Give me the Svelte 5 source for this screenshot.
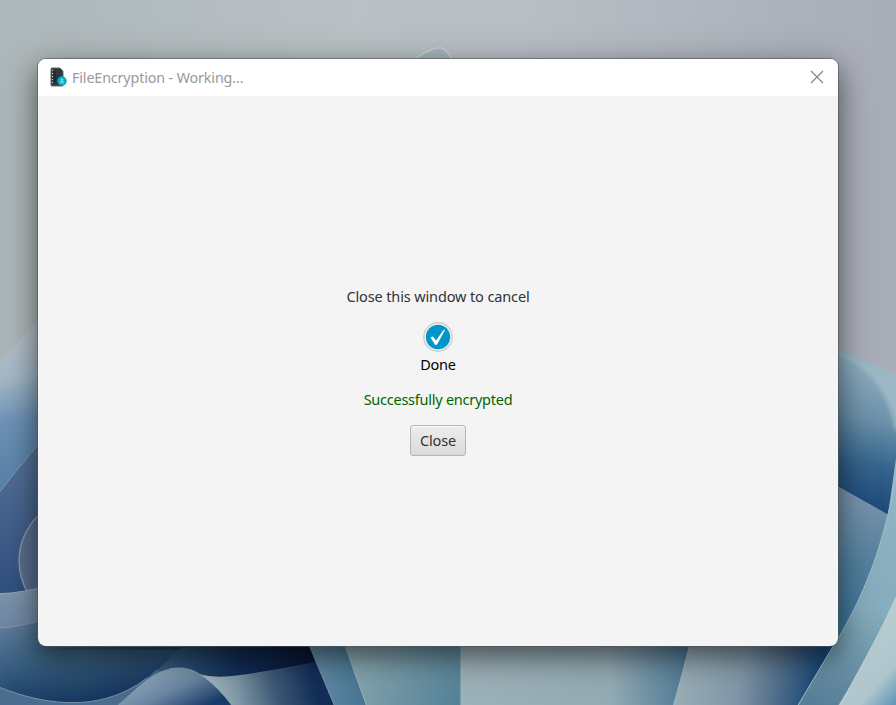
<script>
  const title = 'FileEncryption - Working...';
</script>

<main class="desktop">
  <svg class="wallpaper" viewBox="0 0 896 705" aria-hidden="true">
    <defs>
      <linearGradient id="sky"><stop offset="0" stop-color="#adb7b9" /><stop offset=".4" stop-color="#b9c1c4" /><stop offset=".6" stop-color="#b8bec4" /><stop offset=".9" stop-color="#abb1ba" /><stop offset="1" stop-color="#a9adb8" /></linearGradient>
      <linearGradient id="leftPetal" gradientUnits="userSpaceOnUse" x1="0" y1="345" x2="50" y2="600"><stop offset="0" stop-color="#b1bfc8" /><stop offset=".13" stop-color="#a5b8c7" /><stop offset=".3" stop-color="#6c92b6" /><stop offset=".6" stop-color="#547da6" /><stop offset="1" stop-color="#294979" /></linearGradient>
      <linearGradient id="leftInner" x1="0" y1="0" x2="0" y2="1"><stop offset="0" stop-color="#607a9d" /><stop offset="1" stop-color="#2b4b7d" /></linearGradient>
      <linearGradient id="fold" x1="0" y1="0" x2="0" y2="1"><stop offset="0" stop-color="#8296ad" /><stop offset="1" stop-color="#66809f" /></linearGradient>
      <linearGradient id="bottom" gradientUnits="userSpaceOnUse" x1="15" y1="620" x2="45" y2="705"><stop offset="0" stop-color="#617d9b" /><stop offset=".55" stop-color="#32597d" /><stop offset="1" stop-color="#14335e" /></linearGradient>
      <linearGradient id="basin" gradientUnits="userSpaceOnUse" x1="90" y1="645" x2="105" y2="700"><stop offset="0" stop-color="#416984" /><stop offset="1" stop-color="#14335e" /></linearGradient>
      <linearGradient id="basinFade" gradientUnits="userSpaceOnUse" x1="10" y1="0" x2="80" y2="0"><stop offset="0" stop-color="#fff" stop-opacity="0" /><stop offset="1" stop-color="#fff" /></linearGradient>
      <mask id="basinMask"><rect y="650" width="345" height="55" fill="url(#basinFade)" /></mask>
      <linearGradient id="navy" gradientUnits="userSpaceOnUse" x1="170" y1="655" x2="320" y2="670"><stop offset="0" stop-color="#315879" /><stop offset=".45" stop-color="#122d56" /><stop offset="1" stop-color="#07132f" /></linearGradient>
      <linearGradient id="silver" gradientUnits="userSpaceOnUse" x1="210" y1="697" x2="315" y2="680"><stop offset="0" stop-color="#a0b5bd" /><stop offset=".25" stop-color="#8199a7" /><stop offset=".62" stop-color="#3c5876" /><stop offset="1" stop-color="#122e57" /></linearGradient>
      <linearGradient id="hump" gradientUnits="userSpaceOnUse" x1="163" y1="668" x2="187" y2="716"><stop offset="0" stop-color="#8ca4b7" /><stop offset=".45" stop-color="#6986a1" /><stop offset="1" stop-color="#193b6a" /></linearGradient>
      <linearGradient id="strip"><stop offset="0" stop-color="#688da6" /><stop offset="1" stop-color="#3c708e" /></linearGradient>
      <linearGradient id="teal" gradientUnits="userSpaceOnUse" x1="350" y1="646" x2="455" y2="705"><stop offset="0" stop-color="#8eabb2" /><stop offset="1" stop-color="#558399" /></linearGradient>
      <linearGradient id="center"><stop offset="0" stop-color="#9db2b9" /><stop offset=".65" stop-color="#94abb4" /><stop offset="1" stop-color="#4a7894" /></linearGradient>
      <linearGradient id="centerRight" gradientUnits="userSpaceOnUse" x1="680" y1="660" x2="815" y2="690"><stop offset="0" stop-color="#9aafb7" /><stop offset=".45" stop-color="#8298a8" /><stop offset=".7" stop-color="#58748f" /><stop offset="1" stop-color="#194776" /></linearGradient>
      <linearGradient id="rightPetal" gradientUnits="userSpaceOnUse" x1="870" y1="365" x2="840" y2="512"><stop offset="0" stop-color="#8fafc1" /><stop offset=".35" stop-color="#6c91aa" /><stop offset=".65" stop-color="#35658e" /><stop offset="1" stop-color="#174476" /></linearGradient>
      <linearGradient id="rightInner" x1="0" y1="0" x2="0" y2="1"><stop offset="0" stop-color="#8199b0" /><stop offset=".5" stop-color="#54819f" /><stop offset="1" stop-color="#367397" /></linearGradient>
      <linearGradient id="rim" gradientUnits="userSpaceOnUse" x1="890" y1="450" x2="820" y2="705"><stop offset="0" stop-color="#92b6c4" /><stop offset=".6" stop-color="#86adbd" /><stop offset="1" stop-color="#577e98" /></linearGradient>
      <linearGradient id="outer" gradientUnits="userSpaceOnUse" x1="860" y1="650" x2="905" y2="690"><stop offset="0" stop-color="#b7cbd0" /><stop offset=".6" stop-color="#aec5cd" /><stop offset="1" stop-color="#679ab9" /></linearGradient>
      <filter id="soft" x="-20%" y="-20%" width="140%" height="140%"><feGaussianBlur stdDeviation="2" /></filter>
    </defs>
    <rect width="896" height="705" fill="url(#sky)" />
    <path d="M412 61Q436 44 444 49Q451 54 453 64" fill="#a9b4bc" stroke="#c3ced3" stroke-width="2" />
    <path d="M-4 368Q22 337 60 295V610H-4Z" fill="url(#leftPetal)" />
    <path d="M-4 497Q17 468 60 420V610H-4Z" fill="url(#leftInner)" stroke="#849bb1" />
    <path d="M50 506C18 528 12 562 27 592L50 610Z" fill="#596e8c" stroke="#8296a9" stroke-width="1.5" />
    <path d="M-4 594Q25 593 55 584V646H-4Z" fill="url(#fold)" stroke="#98a9b9" />
    <path d="M-4 628Q20 628 50 617V646H345V710H-4Z" fill="url(#bottom)" stroke="#8396aa" />
    <rect y="640" width="345" height="65" fill="url(#basin)" mask="url(#basinMask)" />
    <path d="M184 645L154 673L125 705H345V640Z" fill="url(#navy)" />
    <path d="M-4 686C48 707 92 708 128 690Q145 681 156 670L170 672L130 710H-4Z" fill="#496c8f" />
    <path d="M-4 686C48 707 92 708 128 690Q138 685 147 678" fill="none" stroke="#7891aa" />
    <path d="M170 668C194 669 201 681 240 675Q283 669 318 661L345 710H200Z" fill="url(#silver)" />
    <path d="M116 707L143 683Q177 656 204 677Q219 688 233 707Z" fill="url(#hump)" stroke="#8ca4b4" stroke-width=".6" />
    <path d="M307 640L335 707H380L342 640Z" fill="url(#strip)" stroke="#7897a9" />
    <path d="M343 640L367 707H465V640Z" fill="url(#teal)" stroke="#9ab2b8" />
    <path d="M461 640V707H675L691 640Z" fill="url(#center)" stroke="#a4b7bd" />
    <path d="M691 640Q682 676 673 707H810L850 640Z" fill="url(#centerRight)" stroke="#a4b7bd" />
    <path d="M830 349C860 354 881 371 900 374V530H830Z" fill="#9bb7c3" />
    <path d="M830 354C870 362 892 392 900 430L888 515L830 482Z" fill="url(#rightPetal)" />
    <path d="M830 351C868 358 890 389 898 430" fill="none" stroke="#9dbac6" stroke-width="5" filter="url(#soft)" />
    <path d="M830 482L889 515V610L830 642Z" fill="url(#rightInner)" />
    <path d="M900 450C887 544 862 602 829 653L797 707H837L900 610Z" fill="url(#rim)" />
    <path d="M900 450C887 544 862 602 829 653L797 707" fill="none" stroke="#9ebfca" />
    <path d="M900 588Q884 627 837 710H900Z" fill="url(#outer)" stroke="#c0d2d5" />
  </svg>

  <section class="window">
    <header>
      <svg class="app-icon" viewBox="0 0 18 20" aria-hidden="true">
        <path d="M2 1H10L13 4V19H2Q1 19 1 18V2Q1 1 2 1Z" fill="#30373c" stroke="#66696b" />
        <path d="M2.5 3V18" stroke="#d1d3d4" stroke-dasharray="1 2" />
        <path d="M5 4V15" stroke="#202a30" stroke-width="2" />
        <circle cx="12" cy="14" r="4.7" fill="#00afc3" />
        <path d="M12 11.8V14L9.8 15.5M12 14L14.2 15.5M10.2 13.2L12 11.8L13.8 13.2M10.5 15.8H13.5" fill="none" stroke="#91e0e6" stroke-width=".9" />
      </svg>
      <h1>{title}</h1>
      <button class="dismiss" aria-label="Close window">
        <svg viewBox="0 0 14 14"><path d="M1 1L13 13M13 1L1 13" fill="none" stroke="#858585" stroke-width="1.15" /></svg>
      </button>
    </header>
    <div class="content">
      <p class="hint">Close this window to cancel</p>
      <svg class="status" viewBox="0 0 30 30" role="img" aria-label="Done">
        <circle cx="15" cy="15" r="14.2" fill="#f4f4f4" stroke="#cecece" stroke-width="1.4" />
        <circle cx="15" cy="15" r="12.2" fill="#0096c9" />
        <path d="M7.5 15.6L10 14.4L13 18.5L20.5 8L22.2 7.4L14 22.8H12Z" fill="#fff" />
      </svg>
      <p class="done">Done</p>
      <p class="success">Successfully encrypted</p>
      <button class="close">Close</button>
    </div>
  </section>
</main>

<style>
  :global(body) { margin: 0; overflow: hidden; }
  .desktop { box-sizing: border-box; display: grid; width: 896px; height: 705px; padding: 59px 58px 59px 38px; position: relative; overflow: hidden; font-family: "Noto Sans", sans-serif; }
  .wallpaper { position: absolute; inset: 0; width: 896px; height: 705px; }
  .window { position: relative; display: flex; flex-direction: column; height: 587px; overflow: hidden; border-radius: 8px; background: #f4f4f4; box-shadow: 0 0 0 1px #4d565b99, 0 10px 24px #0006, 0 10px 44px #0004; }
  header { display: flex; align-items: center; height: 37px; padding: 0 14px 0 12px; background: #fff; }
  .app-icon { width: 18px; height: 20px; margin-top: -1px; }
  h1 { margin: 0 auto 0 4px; color: #999; font-size: 14.3px; line-height: 20px; font-weight: 400; letter-spacing: -.13px; white-space: nowrap; }
  button { font: inherit; padding: 0; }
  .dismiss { display: flex; margin-top: -1px; border: 0; background: none; }
  .dismiss svg { width: 14px; height: 14px; }
  .content { display: flex; flex: 1; flex-direction: column; align-items: center; padding-top: 190px; color: #333; font-size: 14.5px; }
  p { margin: 0; line-height: 20px; white-space: nowrap; }
  .hint { letter-spacing: -.13px; }
  .status { width: 30px; height: 30px; margin-top: 16px; }
  .done { margin-top: 2px; color: #000; letter-spacing: -.25px; }
  .success { margin-top: 15px; color: #006400; letter-spacing: -.25px; }
  .close { box-sizing: border-box; width: 56px; height: 31px; margin-top: 16px; padding-bottom: 2px; border: 1px solid #b5b5b5; border-radius: 3px; background: linear-gradient(#ededed, #dadada); box-shadow: inset 0 1px #fafafa; color: #333; letter-spacing: -.2px; }
</style>
